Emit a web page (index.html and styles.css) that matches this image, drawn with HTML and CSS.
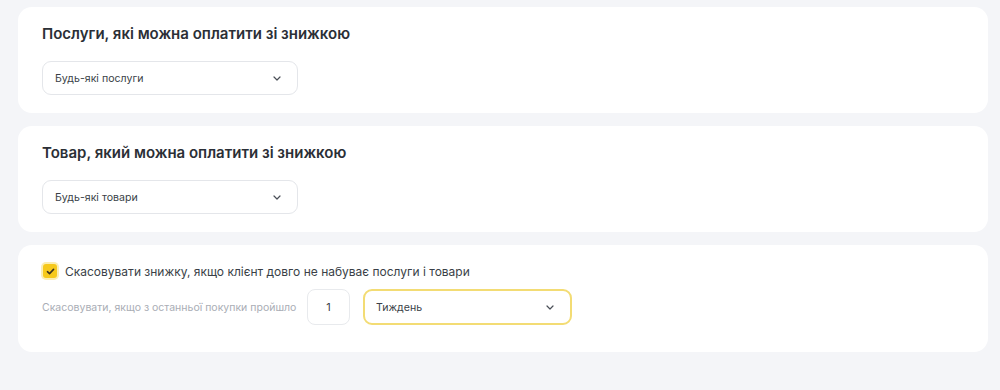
FILE: index.html
```html
<!DOCTYPE html>
<html lang="uk">
<head>
<meta charset="utf-8">
<link rel="stylesheet" href="styles.css">
</head>
<body>
<div class="page">
  <section class="card">
    <h2 class="card-title">Послуги, які можна оплатити зі знижкою</h2>
    <div class="select">
      <span>Будь-які послуги</span>
      <svg class="chev" width="8" height="5" viewBox="0 0 8 5"><path d="M1 1 4 4 7 1" fill="none" stroke="#4a4f57" stroke-width="1.2" stroke-linecap="round" stroke-linejoin="round"/></svg>
    </div>
  </section>
  <section class="card">
    <h2 class="card-title">Товар, який можна оплатити зі знижкою</h2>
    <div class="select">
      <span>Будь-які товари</span>
      <svg class="chev" width="8" height="5" viewBox="0 0 8 5"><path d="M1 1 4 4 7 1" fill="none" stroke="#4a4f57" stroke-width="1.2" stroke-linecap="round" stroke-linejoin="round"/></svg>
    </div>
  </section>
  <section class="card card-cancel">
    <label class="check-row">
      <span class="checkbox">
        <svg width="9" height="7" viewBox="0 0 10 8"><path d="M1.5 4.2 3.9 6.4 8.5 1.6" fill="none" stroke="#3b3320" stroke-width="1.8" stroke-linecap="round" stroke-linejoin="round"/></svg>
      </span>
      <span class="check-label">Скасовувати знижку, якщо клієнт довго не набуває послуги і товари</span>
    </label>
    <div class="period-row">
      <span class="period-label">Скасовувати, якщо з останньої покупки пройшло</span>
      <div class="num-input">1</div>
      <div class="select select-active">
        <span>Тиждень</span>
        <svg class="chev" width="8" height="5" viewBox="0 0 8 5"><path d="M1 1 4 4 7 1" fill="none" stroke="#4a4f57" stroke-width="1.2" stroke-linecap="round" stroke-linejoin="round"/></svg>
      </div>
    </div>
  </section>
</div>
</body>
</html>
```
FILE: styles.css
```css
* { box-sizing: border-box; }
html, body { margin: 0; padding: 0; }
body {
  background: #f4f5f8;
  font-family: Inter, "Noto Sans", "Liberation Sans", sans-serif;
  color: #2b2f36;
  width: 1000px;
  height: 390px;
  overflow: hidden;
}
.page {
  display: flex;
  flex-direction: column;
  gap: 13px;
  padding: 7px 12px 0 18px;
}
.card {
  background: #ffffff;
  border-radius: 14px;
  padding: 17px 24px 18px;
  height: 106px;
  display: flex;
  flex-direction: column;
  gap: 17px;
}
.card-title {
  margin: 0;
  font-size: 15px;
  font-weight: 600;
  line-height: 20px;
  color: #2b2f36;
}
.select {
  width: 256px;
  height: 35px;
  border: 1px solid #e4e6ea;
  border-radius: 9px;
  display: flex;
  align-items: center;
  justify-content: space-between;
  padding: 0 16px 0 12px;
  font-size: 10.6px;
  color: #3a3f47;
}
.chev { display: block; }
.card-cancel {
  height: 107px;
  padding: 17px 24px 26px;
  gap: 9px;
}
.check-row {
  display: flex;
  align-items: center;
  gap: 8px;
  height: 18px;
}
.checkbox {
  width: 14px;
  height: 14px;
  margin-left: 1px;
  border-radius: 3px;
  background: #f6c91c;
  box-shadow: 0 0 0 2px #fbeeb3;
  display: flex;
  align-items: center;
  justify-content: center;
}
.check-label {
  font-size: 12px;
  color: #3a3f47;
}
.period-row {
  display: flex;
  align-items: center;
  height: 36px;
}
.period-label {
  font-size: 10.5px;
  color: #a9adb5;
  width: 265px;
}
.num-input {
  width: 43px;
  height: 36px;
  border: 1px solid #e8eaed;
  border-radius: 8px;
  display: flex;
  align-items: center;
  justify-content: center;
  font-size: 11px;
  color: #3a3f47;
  margin-right: 13px;
}
.select-active {
  width: 209px;
  height: 36px;
  border: 2px solid #f3dc74;
  border-radius: 9px;
  padding: 0 16px 0 11px;
  font-size: 10.6px;
}
```
